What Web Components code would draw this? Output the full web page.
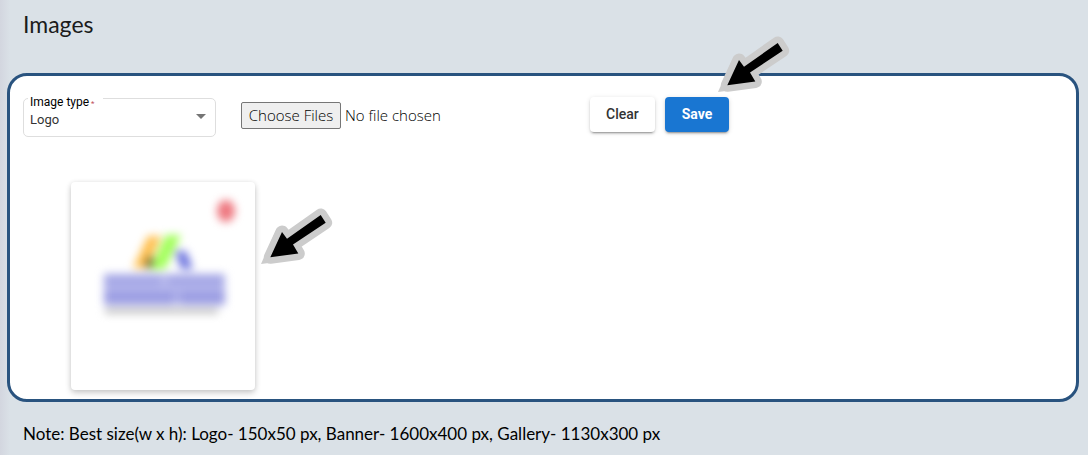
<!DOCTYPE html>
<html lang="en">
<head>
<meta charset="utf-8">
<title>Images</title>
<style>
  body { margin: 0; min-height: 100vh; background: linear-gradient(90deg, #d3d6df 0, #dae1e7 10px); font-family: Roboto, sans-serif; color: #000; }
</style>
</head>
<body>
<images-page></images-page>
<script>
function define(name, html) {
  const template = document.createElement('template');
  template.innerHTML = html;
  customElements.define(name, class extends HTMLElement {
    constructor() {
      super();
      this.attachShadow({ mode: 'open' }).append(template.content.cloneNode(true));
    }
  });
}

define('pointer-arrow', `
  <style>:host { display: block; width: 80px; height: 64px; pointer-events: none } svg { display: block }</style>
  <svg width="80" height="64" viewBox="0 0 80 64" aria-hidden="true">
    <path d="M3 59 19 23 29 34 40 48 42 54Z" fill="#ccc"/>
    <path d="M12.3 52.3 24 27 29 33.7 62.7 10 67.7 17.7 35 39.5 40.3 48.5Z" fill="#000" stroke="#ccc" stroke-width="13" stroke-linejoin="round" paint-order="stroke"/>
  </svg>`);

define('select-field', `
  <style>
    :host { display: block; position: relative; width: 193px; height: 39px; box-sizing: border-box; border: 1px solid #dedede; border-radius: 5px; font: 12px Roboto, sans-serif }
    label { position: absolute; left: 4px; top: -5px; width: 75px; padding-left: 2px; box-sizing: border-box; line-height: 16px; background: #fff }
    label span { color: #c0505a; font-size: 8px; margin-left: 2px; }
    select { appearance: none; display: block; width: 100%; height: 37px; border: 0; padding: 4px 24px 0 6px; background: transparent; font: 13px Roboto, sans-serif; color: #333; outline-offset: 2px }
    svg { position: absolute; right: 9px; top: 15px; pointer-events: none }
  </style>
  <select id="type"><option>Logo</option><option>Banner</option><option>Gallery</option></select>
  <label for="type">Image type<span>*</span></label>
  <svg width="10" height="5" viewBox="0 0 10 5" aria-hidden="true"><path d="M0 0H10L5 5Z" fill="#757575"/></svg>`);

define('file-picker', `
  <style>
    :host { display: block }
    input { display: block; width: 100%; font: 300 15px "Open Sans", sans-serif; color: #000 }
    input::file-selector-button { box-sizing: border-box; height: 27px; width: 100px; margin: 0 4px 0 0; padding: 0 0 2px; border: 1px solid #767676; border-radius: 2px; background: #efefef; font: inherit; color: #000 }
  </style>
  <input type="file" multiple aria-label="Image files">`);

define('action-button', `
  <style>
    :host { display: block; position: relative }
    button { display: block; height: 35px; padding: 0 16px; border: 0; border-radius: 4px; font: 500 14px/35px Roboto, sans-serif; color: #333; background: #fff; box-shadow: 0 3px 1px -2px #0003, 0 2px 2px #0002, 0 1px 5px #0002 }
    :host([primary]) button { padding: 0 17px; color: #fff; background: #1976d2; font-weight: 700 }
    ::slotted(pointer-arrow) { position: absolute; left: 50px; top: -64px }
  </style>
  <button type="button"><slot></slot></button><slot name="pointer"></slot>`);

define('image-card', `
  <style>
    :host { display: block; position: relative; width: 184px; height: 208px; background: #fff; border-radius: 4px; box-shadow: 0 3px 6px #0003, 0 0 5px #0001 }
    svg { display: block; width: 100% }
    ::slotted(pointer-arrow) { position: absolute; left: 187px; top: 23px }
  </style>
  <svg viewBox="0 0 184 208" role="img" aria-label="Logo preview">
    <defs><filter id="b" x="-30%" y="-30%" width="160%" height="160%" color-interpolation-filters="sRGB"><feGaussianBlur stdDeviation="4"/></filter></defs>
    <g filter="url(#b)">
      <ellipse cx="155" cy="29" rx="9" ry="11" fill="#ee7880"/>
      <path d="M77 54H90L77 86H62Z" fill="#ffc04f"/>
      <path d="M79 72 86 86H73Z" fill="#6d6038"/>
      <path d="M95 53H110L94 87H79Z" fill="#98ff48" opacity=".9"/>
      <path d="M104 69H115L122 87H110Z" fill="#7077df"/>
      <path d="M33 92H154V122H33Z" fill="#b8baed"/>
      <path d="M33 92H90V104H33ZM97 92H153V104H97Z" fill="#a5a7e6"/>
      <path d="M33 109H104V123H33ZM108 109H154V123H108Z" fill="#9c9ee3"/>
      <path d="M34 127H147V131H34Z" fill="#aaa"/>
    </g>
  </svg>
  <slot name="pointer"></slot>`);

define('image-panel', `
  <style>
    :host { display: block; margin: 0 9px 0 7px; padding: 21px 13px 9px; border: 3px solid #29537f; border-radius: 20px; background: #fff }
    .tools { display: flex; align-items: flex-start }
    select-field { margin: 1px 25px 0 0; flex: none }
    file-picker { width: 349px; margin-top: 5px }
    .actions { display: flex; gap: 10px }
    .gallery { padding: 45px 48px 0 }
  </style>
  <div class="tools">
    <select-field></select-field>
    <file-picker></file-picker>
    <div class="actions">
      <action-button>Clear</action-button>
      <action-button primary>Save<pointer-arrow slot="pointer"></pointer-arrow></action-button>
    </div>
  </div>
  <div class="gallery"><image-card><pointer-arrow slot="pointer"></pointer-arrow></image-card></div>`);

define('images-page', `
  <style>
    :host { display: block; font-family: Lato, sans-serif }
    h1 { margin: 0; padding: 9px 23px 34px; font-size: 23px; line-height: 30px; font-weight: 400; color: #1b1b1b }
    p { margin: 0; padding: 20px 23px 0; font-size: 17px; line-height: 24px }
  </style>
  <h1>Images</h1>
  <image-panel></image-panel>
  <p>Note: Best size(w x h): Logo- 150x50 px, Banner- 1600x400 px, Gallery- 1130x300 px</p>`);
</script>
</body>
</html>
